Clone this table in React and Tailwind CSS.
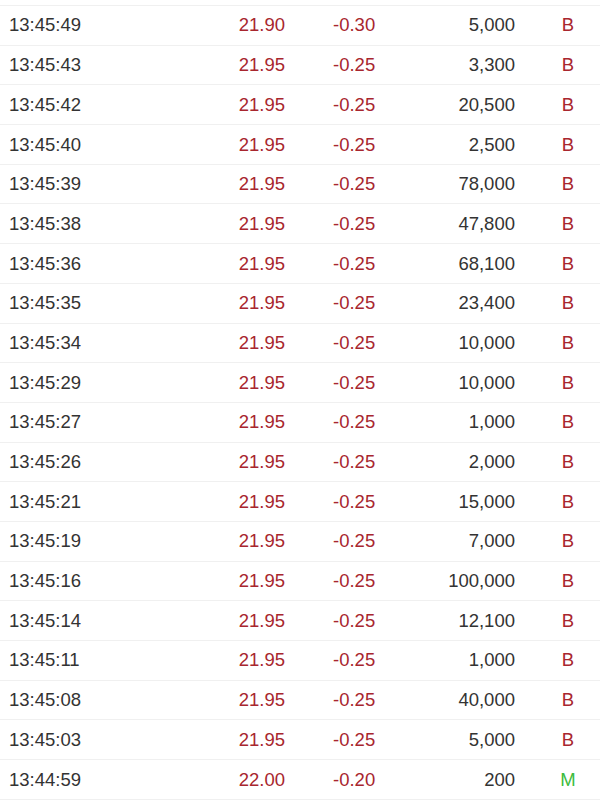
import React from 'react';

const trades = [
  ['13:45:49', '21.90', '-0.30', '5,000', 'B'],
  ['13:45:43', '21.95', '-0.25', '3,300', 'B'],
  ['13:45:42', '21.95', '-0.25', '20,500', 'B'],
  ['13:45:40', '21.95', '-0.25', '2,500', 'B'],
  ['13:45:39', '21.95', '-0.25', '78,000', 'B'],
  ['13:45:38', '21.95', '-0.25', '47,800', 'B'],
  ['13:45:36', '21.95', '-0.25', '68,100', 'B'],
  ['13:45:35', '21.95', '-0.25', '23,400', 'B'],
  ['13:45:34', '21.95', '-0.25', '10,000', 'B'],
  ['13:45:29', '21.95', '-0.25', '10,000', 'B'],
  ['13:45:27', '21.95', '-0.25', '1,000', 'B'],
  ['13:45:26', '21.95', '-0.25', '2,000', 'B'],
  ['13:45:21', '21.95', '-0.25', '15,000', 'B'],
  ['13:45:19', '21.95', '-0.25', '7,000', 'B'],
  ['13:45:16', '21.95', '-0.25', '100,000', 'B'],
  ['13:45:14', '21.95', '-0.25', '12,100', 'B'],
  ['13:45:11', '21.95', '-0.25', '1,000', 'B'],
  ['13:45:08', '21.95', '-0.25', '40,000', 'B'],
  ['13:45:03', '21.95', '-0.25', '5,000', 'B'],
  ['13:44:59', '22.00', '-0.20', '200', 'M'],
];

export default function App() {
  return (
    <div
      className="w-[600px] h-[800px] bg-white pt-[5px] overflow-hidden text-[18.5px] text-[#333333]"
      style={{ fontFamily: '"Liberation Sans", Arial, sans-serif' }}
    >
      {trades.map(([time, price, change, vol, side]) => (
        <div
          key={time}
          className="flex items-center h-[39.7px] border-t border-[#f0f0f0]"
        >
          <div className="w-[200px] pl-[9px]">{time}</div>
          <div className="w-[85px] text-right text-[#a8262e]">{price}</div>
          <div className="w-[140px] pl-[48px] text-[#a8262e]">{change}</div>
          <div className="w-[90px] text-right">{vol}</div>
          <div
            className={
              side === 'M'
                ? 'ml-[21px] w-[64px] text-center text-[#3dbb3d]'
                : 'ml-[21px] w-[64px] text-center text-[#a8262e]'
            }
          >
            {side}
          </div>
        </div>
      ))}
      <div className="border-t border-[#f0f0f0]" />
    </div>
  );
}
